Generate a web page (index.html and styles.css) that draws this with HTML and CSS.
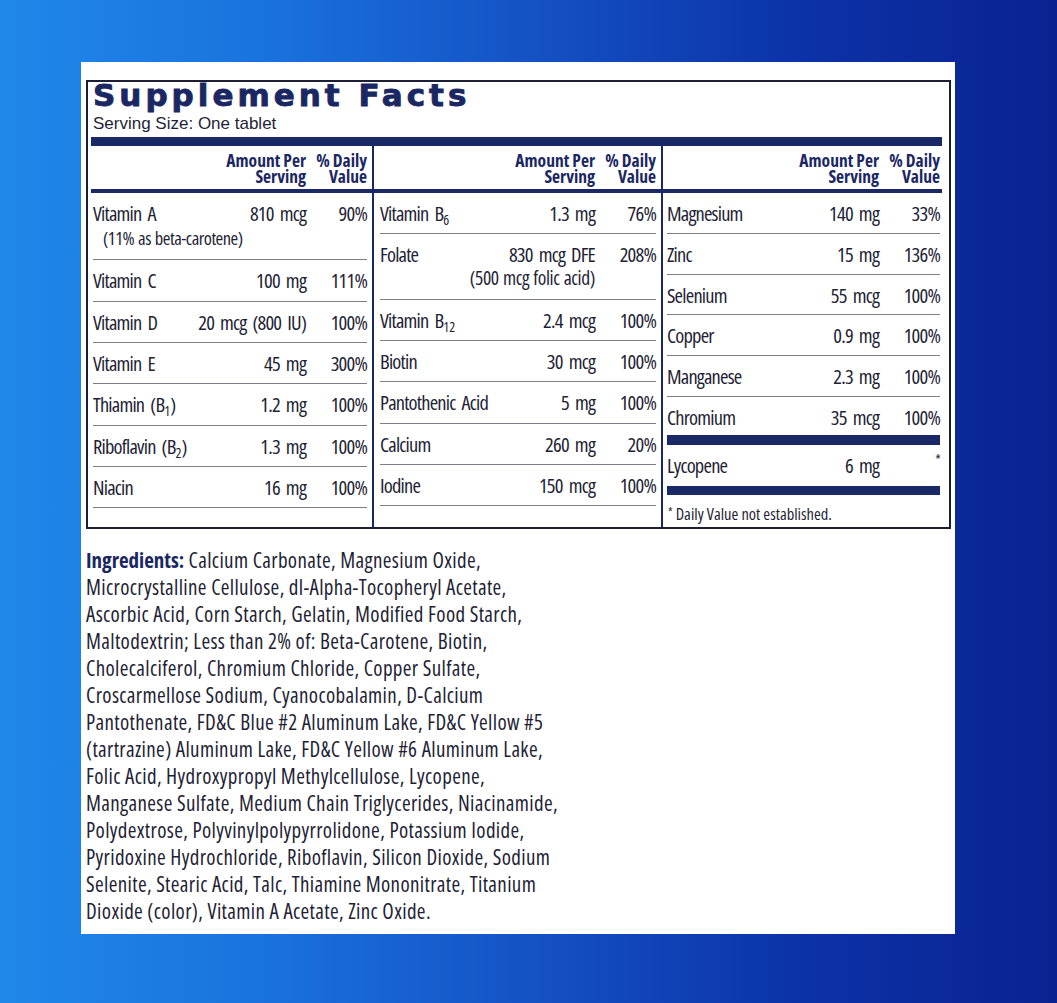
FILE: index.html
```html
<!DOCTYPE html>
<html>
<head>
<meta charset="utf-8">
<link rel="stylesheet" href="styles.css">
</head>
<body>
<div class="card">
  <div class="facts">
    <div class="title">Supplement Facts</div>
    <div class="serving">Serving Size: One tablet</div>
    <div class="bar thick"></div>
    <div class="cols head">
      <div class="col c1"><div class="hrow"><span class="hamt">Amount Per<br>Serving</span><span class="hdv">% Daily<br>Value</span></div></div>
      <div class="col c2"><div class="hrow"><span class="hamt">Amount Per<br>Serving</span><span class="hdv">% Daily<br>Value</span></div></div>
      <div class="col c3"><div class="hrow"><span class="hamt">Amount Per<br>Serving</span><span class="hdv">% Daily<br>Value</span></div></div>
    </div>
    <div class="bar mid"></div>
    <div class="cols body">
      <div class="col c1">
        <div class="row"><span class="lbl">Vitamin A<span class="sub1">(11% as beta-carotene)</span></span><span class="amt">810 mcg</span><span class="dv">90%</span></div>
        <div class="row"><span class="lbl">Vitamin C</span><span class="amt">100 mg</span><span class="dv">111%</span></div>
        <div class="row"><span class="lbl">Vitamin D</span><span class="amt">20 mcg (800 IU)</span><span class="dv">100%</span></div>
        <div class="row"><span class="lbl">Vitamin E</span><span class="amt">45 mg</span><span class="dv">300%</span></div>
        <div class="row"><span class="lbl">Thiamin (B<sub>1</sub>)</span><span class="amt">1.2 mg</span><span class="dv">100%</span></div>
        <div class="row"><span class="lbl">Riboflavin (B<sub>2</sub>)</span><span class="amt">1.3 mg</span><span class="dv">100%</span></div>
        <div class="row"><span class="lbl">Niacin</span><span class="amt">16 mg</span><span class="dv">100%</span></div>
      </div>
      <div class="col c2">
        <div class="row"><span class="lbl">Vitamin B<sub>6</sub></span><span class="amt">1.3 mg</span><span class="dv">76%</span></div>
        <div class="row"><span class="lbl">Folate</span><span class="amt">830 mcg DFE<span class="sub2">(500 mcg folic acid)</span></span><span class="dv">208%</span></div>
        <div class="row"><span class="lbl">Vitamin B<sub>12</sub></span><span class="amt">2.4 mcg</span><span class="dv">100%</span></div>
        <div class="row"><span class="lbl">Biotin</span><span class="amt">30 mcg</span><span class="dv">100%</span></div>
        <div class="row"><span class="lbl">Pantothenic Acid</span><span class="amt">5 mg</span><span class="dv">100%</span></div>
        <div class="row"><span class="lbl">Calcium</span><span class="amt">260 mg</span><span class="dv">20%</span></div>
        <div class="row"><span class="lbl">Iodine</span><span class="amt">150 mcg</span><span class="dv">100%</span></div>
      </div>
      <div class="col c3">
        <div class="row"><span class="lbl">Magnesium</span><span class="amt">140 mg</span><span class="dv">33%</span></div>
        <div class="row"><span class="lbl">Zinc</span><span class="amt">15 mg</span><span class="dv">136%</span></div>
        <div class="row"><span class="lbl">Selenium</span><span class="amt">55 mcg</span><span class="dv">100%</span></div>
        <div class="row"><span class="lbl">Copper</span><span class="amt">0.9 mg</span><span class="dv">100%</span></div>
        <div class="row"><span class="lbl">Manganese</span><span class="amt">2.3 mg</span><span class="dv">100%</span></div>
        <div class="row last"><span class="lbl">Chromium</span><span class="amt">35 mcg</span><span class="dv">100%</span></div>
        <div class="bar lyco"></div>
        <div class="row lycorow"><span class="lbl">Lycopene</span><span class="amt">6 mg</span><span class="dv star">*</span></div>
        <div class="bar lyco2"></div>
        <div class="foot"><span class="fstar">*</span>Daily Value not established.</div>
      </div>
    </div>
  </div>
  <div class="ingredients">
    <div class="iline"><b>Ingredients:</b> Calcium Carbonate, Magnesium Oxide,</div>
    <div class="iline">Microcrystalline Cellulose, dl-Alpha-Tocopheryl Acetate,</div>
    <div class="iline">Ascorbic Acid, Corn Starch, Gelatin, Modified Food Starch,</div>
    <div class="iline">Maltodextrin; Less than 2% of: Beta-Carotene, Biotin,</div>
    <div class="iline">Cholecalciferol, Chromium Chloride, Copper Sulfate,</div>
    <div class="iline">Croscarmellose Sodium, Cyanocobalamin, D-Calcium</div>
    <div class="iline">Pantothenate, FD&amp;C Blue #2 Aluminum Lake, FD&amp;C Yellow #5</div>
    <div class="iline">(tartrazine) Aluminum Lake, FD&amp;C Yellow #6 Aluminum Lake,</div>
    <div class="iline">Folic Acid, Hydroxypropyl Methylcellulose, Lycopene,</div>
    <div class="iline">Manganese Sulfate, Medium Chain Triglycerides, Niacinamide,</div>
    <div class="iline">Polydextrose, Polyvinylpolypyrrolidone, Potassium Iodide,</div>
    <div class="iline">Pyridoxine Hydrochloride, Riboflavin, Silicon Dioxide, Sodium</div>
    <div class="iline">Selenite, Stearic Acid, Talc, Thiamine Mononitrate, Titanium</div>
    <div class="iline">Dioxide (color), Vitamin A Acetate, Zinc Oxide.</div>
  </div>
</div>
</body>
</html>
```

FILE: styles.css
```css
html, body { margin: 0; padding: 0; }
body {
  width: 1057px;
  height: 1003px;
  overflow: hidden;
  background: linear-gradient(to right, #1f88e9 0%, #1a72de 25%, #1452c6 50%, #0c33a8 75%, #0a2290 100%);
  font-family: "Open Sans", "Liberation Sans", sans-serif;
  font-stretch: 75%;
  color: #1f1f36;
}
.card {
  margin: 62px 0 0 81px;
  width: 874px;
  height: 872px;
  background: #fff;
  box-sizing: border-box;
  padding: 18px 4px 0 5px;
}
.facts {
  width: 865px;
  height: 449px;
  box-sizing: border-box;
  border: 2px solid #1c1e36;
  padding: 0 7px 0 3px;
}
.title {
  font-family: "DejaVu Sans", sans-serif;
  font-stretch: normal;
  font-weight: bold;
  font-size: 31px;
  letter-spacing: 4px;
  line-height: 26px;
  color: #1b2763;
  -webkit-text-stroke: 0.9px #1b2763;
  padding-left: 2px;
  white-space: nowrap;
}
.serving {
  margin-top: 5px;
  font-family: "Liberation Sans", sans-serif;
  font-stretch: normal;
  font-size: 17px;
  line-height: 22px;
  padding-left: 2px;
}
.bar { background: #1b2866; }
.bar.thick { height: 9px; margin-top: 2px; }
.bar.mid { height: 4px; }
.cols {
  display: grid;
  grid-template-columns: 281px 289px 281px;
}
.col { box-sizing: border-box; }
.c1 { padding: 0 5px 0 2px; }
.c2 { padding: 0 5px 0 6px; border-left: 2px solid #1b2866; }
.c3 { padding: 0 2px 0 4px; border-left: 2px solid #1b2866; }
.head .col { height: 43px; padding-top: 6px; }
.hrow {
  display: flex;
  justify-content: flex-end;
  font-weight: bold;
  font-size: 17.5px;
  line-height: 16px;
  color: #1b2763;
  text-align: right;
  white-space: nowrap;
}
.hdv { width: 61px; }
.body { height: 334px; }
.row {
  display: flex;
  align-items: flex-start;
  padding: 8px 0 8.33px;
  border-bottom: 1px solid #7c7e8c;
  font-size: 20.5px;
  line-height: 24px;
  letter-spacing: -0.8px;
  word-spacing: 3px;
}
.c3 .row { padding-bottom: 7.75px; }
.lbl { flex: 1 1 0; min-width: 0; white-space: nowrap; }
.amt { text-align: right; white-space: nowrap; }
.dv { width: 61px; flex: none; text-align: right; }
sub { font-size: 14px; line-height: 0; vertical-align: -4px; letter-spacing: 0; }
.sub1 { display: block; font-size: 18.5px; line-height: 26px; padding-left: 10px; letter-spacing: -0.5px; word-spacing: 1px; }
.sub2 { display: block; font-size: 19.5px; line-height: 24px; letter-spacing: -0.4px; word-spacing: 1px; }
.c3 .row.last { border-bottom: none; padding-bottom: 6px; }
.bar.lyco { height: 10px; }
.c3 .lycorow { border-bottom: none; padding-bottom: 9px; }
.star { font-size: 14px; line-height: 14px; }
.bar.lyco2 { height: 9px; }
.foot { font-size: 16.5px; line-height: 18px; padding-top: 9px; padding-left: 1px; white-space: nowrap; }
.fstar { font-size: 12px; vertical-align: 3px; margin-right: 3px; }
.ingredients {
  margin-top: 18px;
  font-size: 21px;
  letter-spacing: 0.35px;
  line-height: 27px;
}
.iline { white-space: nowrap; }
.ingredients b { color: #1b2763; letter-spacing: 0; }
```
